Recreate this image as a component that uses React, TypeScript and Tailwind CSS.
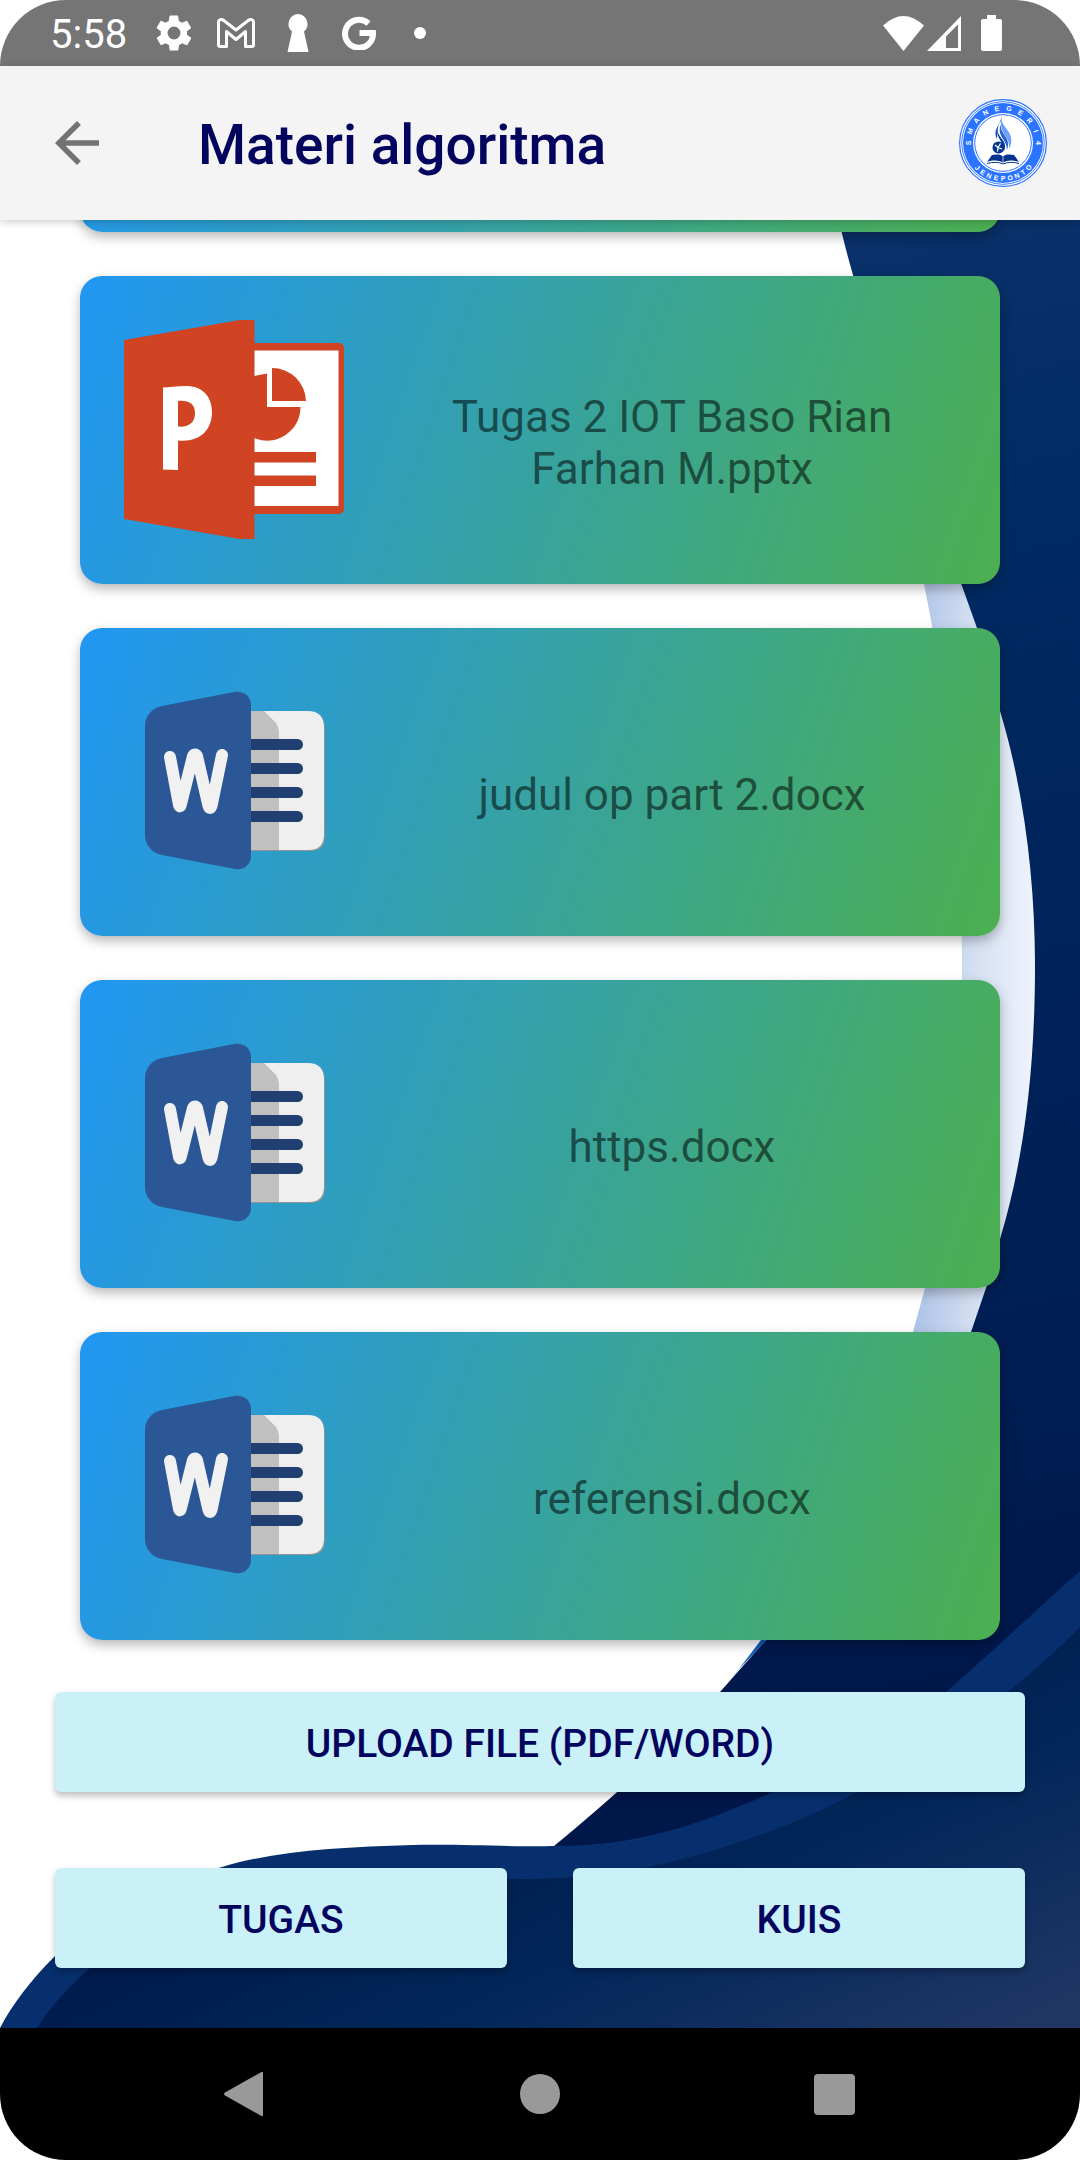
import React from "react";

function StatusBar() {
  return (
    <div className="flex h-[66px] shrink-0 items-center justify-between bg-[#757575] pr-[78px] pl-[50px] text-white">
      <div className="flex items-center">
        <span className="w-[103px] pt-1 text-[40px] leading-[48px]">5:58</span>
        <svg aria-hidden="true" viewBox="0 0 24 24" className="mr-[22px] h-[42px] w-[42px]" fill="currentColor">
          <path
            fillRule="evenodd"
            d="M19.4 13c0-.3.1-.6.1-1s0-.7-.1-1l2.1-1.6c.2-.2.3-.4.1-.7l-2-3.4c-.1-.2-.4-.3-.6-.2l-2.5 1c-.5-.4-1.1-.7-1.700-1l-.4-2.600c0-.3-.2-.5-.5-.5h-4c-.2 0-.4.2-.5.5l-.4 2.600c-.6.3-1.200.6-1.700 1l-2.500-1c-.2-.1-.5 0-.6.2l-2 3.400c-.1.2-.1.5.1.7L4.500 11c0 .3-.1.7-.1 1s0 .7.1 1l-2.100 1.600c-.2.2-.3.4-.1.7l2 3.400c.1.2.4.3.6.2l2.500-1c.5.4 1.100.7 1.700 1l.4 2.600c0 .3.2.5.5.5h4c.2 0 .4-.2.5-.5l.4-2.600c.6-.3 1.200-.6 1.700-1l2.500 1c.2.1.5 0 .6-.2l2-3.400c.1-.2.1-.5-.1-.7zM12 15.700a3.700 3.700 0 1 1 0-7.400 3.700 3.700 0 0 1 0 7.400z"
          />
        </svg>
        <svg aria-hidden="true" viewBox="0 0 38 30" className="mr-[32px] h-[30px] w-[38px]" fill="none" stroke="currentColor" strokeWidth="3" strokeLinejoin="round">
          <path d="M1.500 4.500C1.500 1.500 4.500.8 6.500 2.300L19 12 31.500 2.300c2-1.500 5-.8 5 2.200V27c0 1-.6 1.500-1.600 1.500h-6.400V13.500L19 21.500l-9.500-8v15H3.100c-1 0-1.600-.5-1.600-1.500z" />
        </svg>
        <svg aria-hidden="true" viewBox="0 0 22 38" className="mr-[33px] h-[38px] w-[22px]" fill="currentColor">
          <path d="M11 0a10 10 0 0 1 6 17.500L21.500 38H.5L5 17.500A10 10 0 0 1 11 0z" />
        </svg>
        <svg aria-hidden="true" viewBox="0 0 34 34" className="mr-[38px] h-[34px] w-[34px]" fill="none" stroke="currentColor" strokeWidth="6">
          <path d="M26.500 7.500A14 14 0 1 0 31 17H17.500" />
        </svg>
        <span className="h-3 w-3 rounded-full bg-white" />
      </div>
      <div className="flex items-center">
        <svg aria-hidden="true" viewBox="0 0 41 35" className="mr-[3px] h-[35px] w-[41px]" fill="currentColor">
          <path d="M0 9.500Q20.500-9.500 41 9.500L20.500 35z" />
        </svg>
        <svg aria-hidden="true" viewBox="0 0 34 35" className="mr-[20px] h-[35px] w-[34px]" fill="currentColor">
          <path fillRule="evenodd" d="M0 35 34 0v35zM19 20.500V32h12V8.500z" />
        </svg>
        <svg aria-hidden="true" viewBox="0 0 21 36" className="h-[36px] w-[21px]" fill="currentColor">
          <path d="M6 0h9v4h4a2 2 0 0 1 2 2v28a2 2 0 0 1-2 2H2a2 2 0 0 1-2-2V6a2 2 0 0 1 2-2h4z" />
        </svg>
      </div>
    </div>
  );
}

const topLetters = "SMANEGERI4".split("");
const bottomLetters = "JENEPONTO".split("");

function SchoolLogo() {
  return (
    <svg role="img" aria-label="SMA Negeri 4 Jeneponto" viewBox="0 0 88 88" className="h-[88px] w-[88px]">
      <circle cx="44" cy="44" r="43.400" fill="#fff" stroke="#2b74ff" strokeWidth="1.200" />
      <circle cx="44" cy="44" r="41.300" fill="none" stroke="#2b74ff" strokeWidth=".9" />
      <circle cx="44" cy="44" r="40" fill="#2b74ff" />
      <circle cx="44" cy="44" r="30" fill="#fff" />
      <circle cx="44" cy="44" r="28.300" fill="none" stroke="#2b74ff" strokeWidth="1" />
      <g fill="#fff" fontSize="7" fontWeight="700" fontFamily="Liberation Sans, sans-serif" textAnchor="middle">
        {topLetters.map((letter, i) => (
          <text key={i} x="44" y="11.500" transform={`rotate(${i * 20 - 90} 44 44)`}>
            {letter}
          </text>
        ))}
        {bottomLetters.map((letter, i) => (
          <text key={i} x="44" y="82" transform={`rotate(${46 - i * 11.5} 44 44)`}>
            {letter}
          </text>
        ))}
      </g>
      <path d="M43 18c-1 8-10 12-5 22 1-6-1-9 5-22z" fill="#1450b8" />
      <path d="M43 18c-3 10 16 15 7 32 2-13-12-16-7-32z" fill="#6da0ff" />
      <path d="M42 25c-2 10 11 13 6 26 0-11-11-14-6-26z" fill="#2f62d0" />
      <path d="M39 29c-2 10 11 12 6 23 0-10-9-13-6-23z" fill="#0b3ca0" />
      <circle cx="39.500" cy="48.500" r="6" fill="#043490" />
      <path d="m36 46 3 2.500 2.500-4M39 48.500l-.5 4M39 48.500l4 1.500" stroke="#fff" strokeWidth="1.300" fill="none" />
      <path d="M33 56c4-1 9-1 11 1.500 2-2.500 7-2.500 11-1.500l5 7c-6-2-12-2-16 .8-4-2.800-10-2.800-16-.8z" fill="#043490" />
      <path d="M28 64.500c6-1.600 12-1.500 16 .5 4-2 10-2.100 16-.5" fill="none" stroke="#043490" strokeWidth="1" />
      <path d="M44 57.500v6.500" stroke="#fff" strokeWidth=".7" />
    </svg>
  );
}

function Header() {
  return (
    <header className="relative z-10 flex h-[154px] shrink-0 items-center bg-[#f4f4f4] pr-[33px] pl-11 shadow-[0_2px_8px_rgba(0,0,0,0.2)]">
      <button type="button" aria-label="Kembali" className="mr-[88px] h-[66px] w-[66px] text-[#737373]">
        <svg viewBox="0 0 24 24" className="h-full w-full" fill="currentColor">
          <path d="M20 11H7.830l5.590-5.590L12 4l-8 8 8 8 1.410-1.410L7.830 13H20v-2z" />
        </svg>
      </button>
      <h1 className="flex-1 pt-1 text-[55px] leading-[64px] font-medium text-[#03045e]">Materi algoritma</h1>
      <SchoolLogo />
    </header>
  );
}

function PowerPointIcon() {
  return (
    <svg aria-hidden="true" viewBox="0 0 220 220" className="h-[220px] w-[220px] shrink-0">
      <path d="M120 23h95a5 5 0 0 1 5 5v161a5 5 0 0 1-5 5h-95z" fill="#d04424" />
      <path d="M130 30.500h84.500V186H130z" fill="#fff" />
      <path d="M130 56 143 53.500V87h33.500A33.500 33.500 0 0 1 130 118z" fill="#d04424" />
      <path d="M148 48a34 34 0 0 1 34 33h-34zM130 132h62v10.500h-62zM130 155.500h62V166h-62z" fill="#d04424" />
      <path d="M0 20 116 0h14.500v219H116L0 199z" fill="#d04424" />
      <path
        fillRule="evenodd"
        d="M39 67.500c6 0 14-1.500 23-1.500 16 0 26 10 26 26 0 18-12 30.500-34 28.500V150l-15-.5zM54 81v25.500c11 1 17-4 17-13.500 0-9-6-13-17-12z"
        fill="#fff"
      />
    </svg>
  );
}

function WordIcon() {
  return (
    <svg aria-hidden="true" viewBox="0 0 220 220" className="h-[220px] w-[220px] shrink-0">
      <path d="M120 40h64q17 0 17 17v107q0 15-15 15h-66z" fill="#949494" />
      <path d="M120 39h64q16 0 16 17v106q0 16-15 16h-65z" fill="#efefef" />
      <path d="M120 39h20l12 12q3 4 3 9v118h-35z" fill="#c0c0c0" />
      <path d="M120 72.500h53.500M120 96.500h53.500M120 120.500h53.500M120 144.500h53.500" stroke="#213f70" strokeWidth="11" strokeLinecap="round" />
      <path d="M21 54c0-10 7-18 17-20l72-14c9-1.500 17 4 17 13v151c0 9-8 14.500-16 13l-73-14c-10-2-17-10-17-20z" fill="#2b5796" />
      <path
        d="M46 85 55 133Q56 136 57 132L69 84Q71 81 73 84L84.500 134Q86 138 87.500 134L98 83"
        fill="none"
        stroke="#f1f1f1"
        strokeWidth="12"
        strokeLinecap="round"
        strokeLinejoin="round"
      />
    </svg>
  );
}

function FileCard({ name, icon }: { name: string; icon: React.ReactNode }) {
  return (
    <button
      type="button"
      className="flex h-[308px] w-full shrink-0 items-center rounded-[22px] bg-linear-[109deg] from-[#2196f3] to-[#4caf50] pl-11 shadow-[0_5px_12px_rgba(0,0,0,0.28)]"
    >
      {icon}
      <span className="flex-1 px-20 pt-[26px] text-center text-[44px] leading-[52px] text-black/55">{name}</span>
    </button>
  );
}

function Backdrop() {
  return (
    <svg aria-hidden="true" viewBox="0 220 1080 1808" preserveAspectRatio="none" className="absolute inset-0 h-full w-full">
      <defs>
        <linearGradient id="navy" gradientUnits="userSpaceOnUse" x1="950" y1="220" x2="1250" y2="1700">
          <stop offset="0" stopColor="#0a316a" />
          <stop offset=".2" stopColor="#002b63" />
          <stop offset=".45" stopColor="#00245b" />
          <stop offset=".7" stopColor="#001f54" />
          <stop offset=".95" stopColor="#00174a" />
        </linearGradient>
        <linearGradient id="pale" gradientUnits="userSpaceOnUse" x1="910" y1="0" x2="1035" y2="0">
          <stop offset="0" stopColor="#a9c0e6" />
          <stop offset=".5" stopColor="#d3dff1" />
          <stop offset="1" stopColor="#eff3fc" />
        </linearGradient>
        <linearGradient id="deep" gradientUnits="userSpaceOnUse" x1="700" y1="1640" x2="900" y2="2080">
          <stop offset="0" stopColor="#00174b" />
          <stop offset=".25" stopColor="#001f50" />
          <stop offset=".5" stopColor="#022659" />
          <stop offset="1" stopColor="#203665" />
        </linearGradient>
      </defs>
      <path d="M0 220h1080v1808H0z" fill="#fff" />
      <path d="M880 420C915 520 962 720 962 960 962 1120 950 1210 925 1288L913 1332 880 1420H1000L1080 960 980 500z" fill="url(#pale)" />
      <path
        d="M839 220C860 320 925 480 977 628 987 660 992 680 1000 711 1024 790 1035 880 1035 965 1035 1070 1024 1160 1000 1239L986 1288 971 1332C930 1450 850 1550 766 1640L720 1692C690 1724 630 1784 554 1846L560 1900h520V220z"
        fill="url(#navy)"
      />
      <path d="M761 1640 726 1686 740 1668 767 1640z" fill="#0f5cb5" />
      <path
        d="M1080 1571C1040 1606 1000 1645 946 1692 890 1740 835 1765 773 1792 700 1824 640 1846 554 1846 520 1847 460 1844 413 1845 340 1847 275 1851 222 1867 130 1890 80 1930 55 1956 30 1981 12 2005 0 2028H1080z"
        fill="#072f6e"
      />
      <path
        d="M1080 1627C1060 1647 1040 1666 1008 1692 965 1728 920 1760 857 1792 790 1828 715 1853 648 1867 560 1885 500 1878 420 1875 280 1878 170 1900 90 1968 65 1990 48 2010 37 2028H1080z"
        fill="url(#deep)"
      />
    </svg>
  );
}

const files = [
  { name: "Tugas 2 IOT Baso Rian Farhan M.pptx", kind: "ppt" },
  { name: "judul op part 2.docx", kind: "word" },
  { name: "https.docx", kind: "word" },
  { name: "referensi.docx", kind: "word" },
];

function ActionButton({ children }: { children: React.ReactNode }) {
  return (
    <button
      type="button"
      className="h-[100px] flex-1 rounded-md bg-[#caf0f8] pt-1 text-[39px] leading-[46px] font-medium text-[#03045e] uppercase shadow-[0_4px_6px_rgba(0,0,0,0.25)]"
    >
      {children}
    </button>
  );
}

function NavBar() {
  return (
    <nav className="flex h-[132px] shrink-0 items-center justify-around bg-black px-[98px] text-[#999]">
      <button type="button" aria-label="Back" className="flex flex-1 justify-center">
        <svg viewBox="0 0 44 44" className="h-11 w-11" fill="currentColor">
          <path d="M40 .5v43q0 1-1.500.5L2 23.500q-2-1.500 0-3L38.500 0q1.500-.5 1.500.5z" />
        </svg>
      </button>
      <button type="button" aria-label="Home" className="flex flex-1 justify-center">
        <span className="h-10 w-10 rounded-full bg-current" />
      </button>
      <button type="button" aria-label="Recent apps" className="flex flex-1 justify-center">
        <span className="h-[41px] w-[41px] rounded-sm bg-current" />
      </button>
    </nav>
  );
}

export default function App() {
  return (
    <div className="min-h-screen bg-white font-[Roboto,sans-serif]">
      <div className="flex min-h-screen flex-col overflow-hidden rounded-[66px]">
        <StatusBar />
        <Header />
        <main className="relative flex flex-1 flex-col overflow-hidden">
          <Backdrop />
          <section className="relative flex flex-col gap-11 px-20 pb-13">
            <div className="flex h-3 flex-col justify-end">
              <div className="h-[308px] shrink-0 rounded-[22px] bg-linear-[109deg] from-[#2196f3] to-[#4caf50] shadow-[0_5px_12px_rgba(0,0,0,0.28)]" />
            </div>
            {files.map((file) => (
              <FileCard key={file.name} name={file.name} icon={file.kind === "ppt" ? <PowerPointIcon /> : <WordIcon />} />
            ))}
          </section>
          <div className="relative flex flex-col gap-[76px] px-[55px] pb-[60px]">
            <div className="flex">
              <ActionButton>Upload file (PDF/Word)</ActionButton>
            </div>
            <div className="flex gap-[66px]">
              <ActionButton>Tugas</ActionButton>
              <ActionButton>Kuis</ActionButton>
            </div>
          </div>
        </main>
        <NavBar />
      </div>
    </div>
  );
}
